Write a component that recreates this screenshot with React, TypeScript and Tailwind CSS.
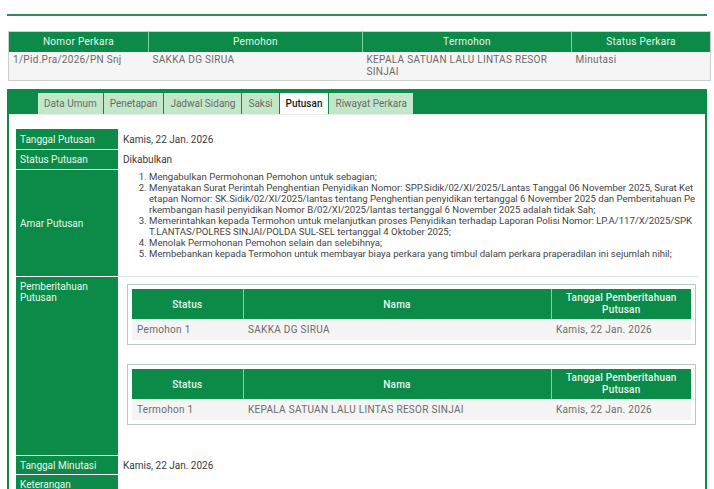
import React from 'react'

const tabs = ['Data Umum', 'Penetapan', 'Jadwal Sidang', 'Saksi', 'Putusan', 'Riwayat Perkara']

const amar = [
  'Mengabulkan Permohonan Pemohon untuk sebagian;',
  'Menyatakan Surat Perintah Penghentian Penyidikan Nomor: SPP.Sidik/02/XI/2025/Lantas Tanggal 06 November 2025, Surat Ketetapan Nomor: SK.Sidik/02/XI/2025/lantas tentang Penghentian penyidikan tertanggal 6 November 2025 dan Pemberitahuan Perkembangan hasil penyidikan Nomor B/02/XI/2025/lantas tertanggal 6 November 2025 adalah tidak Sah;',
  'Memerintahkan kepada Termohon untuk melanjutkan proses Penyidikan terhadap Laporan Polisi Nomor: LP.A/117/X/2025/SPKT.LANTAS/POLRES SINJAI/POLDA SUL-SEL tertanggal 4 Oktober 2025;',
  'Menolak Permohonan Pemohon selain dan selebihnya;',
  'Membebankan kepada Termohon untuk membayar biaya perkara yang timbul dalam perkara praperadilan ini sejumlah nihil;',
]

function NoticeTable({ status, nama }: { status: string; nama: string }) {
  return (
    <div className="border border-[#b9c9c0] bg-white p-[4px]">
      <table className="w-full border-collapse text-[10px]">
        <thead>
          <tr className="bg-[#0b8a48] text-[#e6f7ec] h-[30px] tracking-[0.2px]">
            <th className="w-[111px] font-medium border-r border-[#7fd0a2]">Status</th>
            <th className="w-[308px] font-medium border-r border-[#7fd0a2]">Nama</th>
            <th className="font-medium leading-[12px]">
              Tanggal Pemberitahuan
              <br />
              Putusan
            </th>
          </tr>
        </thead>
        <tbody>
          <tr className="bg-[#f4f4f4] text-[#6b6b6b] h-[21px] tracking-[0.3px]">
            <td className="px-[5px]">{status}</td>
            <td className="px-[5px]">{nama}</td>
            <td className="px-[5px]">Kamis, 22 Jan. 2026</td>
          </tr>
        </tbody>
      </table>
    </div>
  )
}

function Row({ label, children, h }: { label: React.ReactNode; children?: React.ReactNode; h: string }) {
  return (
    <div className={`flex ${h} shrink-0 border-b border-white`}>
      <div className="w-[102px] shrink-0 bg-[#0b8a48] text-[#e8f8ee] px-[4px] flex items-center">{label}</div>
      <div className="flex-1 pl-[5px] flex items-center">{children}</div>
    </div>
  )
}

export default function App() {
  return (
    <div
      className="w-[714px] h-[489px] overflow-hidden bg-white text-[#3a3a3a]"
      style={{ fontFamily: 'Roboto, "Noto Sans", sans-serif' }}
    >
      <div className="mx-[7px] mt-[14px] h-[2px] bg-[#2e8a62]" />

      <table className="ml-[8px] mt-[15px] w-[703px] border-collapse text-[10px] border border-[#c9cfcc]">
        <thead>
          <tr className="bg-[#0b8a48] text-[#e6f7ec] h-[20px] tracking-[0.3px]">
            <th className="w-[140px] font-normal border-r border-[#7fd0a2]">Nomor Perkara</th>
            <th className="w-[214px] font-normal border-r border-[#7fd0a2]">Pemohon</th>
            <th className="w-[209px] font-normal border-r border-[#7fd0a2]">Termohon</th>
            <th className="font-normal">Status Perkara</th>
          </tr>
        </thead>
        <tbody>
          <tr className="bg-[#f5f5f5] text-[#6a6a6a] h-[29px] align-top leading-[12px] tracking-[0.3px]">
            <td className="px-[4px] pt-[2px]">1/Pid.Pra/2026/PN Snj</td>
            <td className="px-[4px] pt-[2px]">SAKKA DG SIRUA</td>
            <td className="px-[4px] pt-[2px]">
              KEPALA SATUAN LALU LINTAS RESOR
              <br />
              SINJAI
            </td>
            <td className="px-[4px] pt-[2px]">Minutasi</td>
          </tr>
        </tbody>
      </table>

      <div className="mx-[7px] mt-[8px] border-x-2 border-[#0b8a48]">
        <div className="bg-[#0b8a48] h-[25px] flex items-end pl-[29px] pt-[4px]">
          {tabs.map((t) => (
            <div
              key={t}
              className={
                t === 'Putusan'
                  ? 'h-[21px] px-[6px] flex items-center bg-white text-[#1a1a1a] font-medium text-[10px] border-r border-[#0b8a48]'
                  : 'h-[21px] px-[6px] flex items-center bg-[#c3e8c9] text-[#6a6a6a] text-[10px] border-r border-[#0b8a48]'
              }
            >
              {t}
            </div>
          ))}
        </div>
        <div className="border-t border-[#e6ece8] h-[5px]" />

        <div className="px-[7px] pt-[10px] text-[10px] flex flex-col">
          <Row label="Tanggal Putusan" h="h-[21px]">
            Kamis, 22 Jan. 2026
          </Row>
          <Row label="Status Putusan" h="h-[20px]">
            Dikabulkan
          </Row>
          <Row label="Amar Putusan" h="h-[107px]">
            <ol className="list-decimal pl-[26px] pr-[2px] text-[9.6px] leading-[10.9px] text-[#444] -mt-[14px]">
              {amar.map((a, i) => (
                <li key={i} className="break-all">
                  {a}
                </li>
              ))}
            </ol>
          </Row>
          <div className="flex h-[179px] shrink-0 border-b border-white">
            <div className="w-[102px] shrink-0 bg-[#0b8a48] text-[#e8f8ee] px-[4px] pt-[4px] leading-[11px]">
              Pemberitahuan
              <br />
              Putusan
            </div>
            <div className="flex-1 pl-[9px] pr-[2px] pt-[7px] flex flex-col gap-[19px] border-t border-[#d7e0db] mt-[-1px]">
              <NoticeTable status="Pemohon 1" nama="SAKKA DG SIRUA" />
              <NoticeTable status="Termohon 1" nama="KEPALA SATUAN LALU LINTAS RESOR SINJAI" />
            </div>
          </div>
          <Row label="Tanggal Minutasi" h="h-[19px]">
            Kamis, 22 Jan. 2026
          </Row>
          <Row label="Keterangan" h="h-[20px]" />
        </div>
      </div>
    </div>
  )
}
